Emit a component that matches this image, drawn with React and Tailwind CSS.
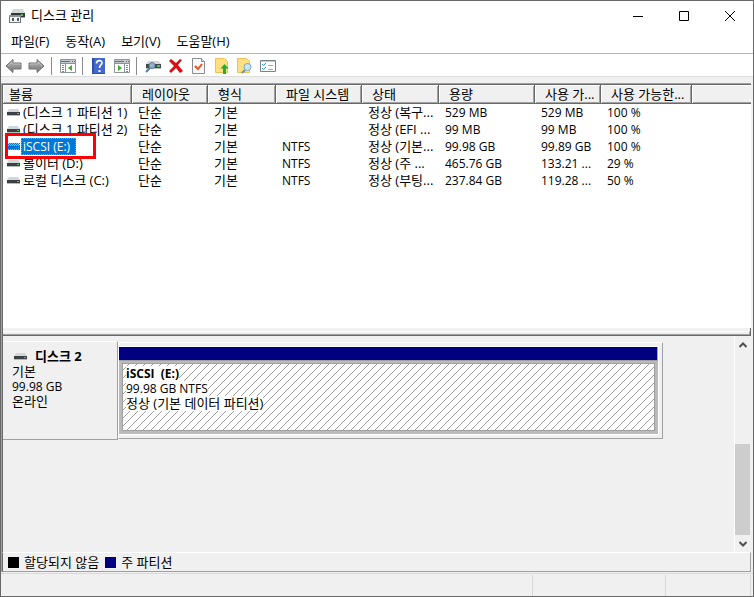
import { useState } from 'react';

const columns = [
  { key: 'volume', label: '볼륨', width: 'w-[129px]' },
  { key: 'layout', label: '레이아웃', width: 'w-[76px]', text: 'text-[13px]' },
  { key: 'type', label: '형식', width: 'w-[68px]', text: 'text-[13px]' },
  { key: 'fs', label: '파일 시스템', width: 'w-[86px]' },
  { key: 'status', label: '상태', width: 'w-[77px]', text: 'text-[13px]' },
  { key: 'capacity', label: '용량', width: 'w-[96px]' },
  { key: 'free', label: '사용 가...', width: 'w-[66px]' },
  { key: 'percent', label: '사용 가능한...', width: 'w-[91px]' },
];

const volumes = [
  { volume: '(디스크 1 파티션 1)', layout: '단순', type: '기본', fs: '', status: '정상 (복구...', capacity: '529 MB', free: '529 MB', percent: '100 %' },
  { volume: '(디스크 1 파티션 2)', layout: '단순', type: '기본', fs: '', status: '정상 (EFI ...', capacity: '99 MB', free: '99 MB', percent: '100 %' },
  { volume: 'iSCSI (E:)', layout: '단순', type: '기본', fs: 'NTFS', status: '정상 (기본...', capacity: '99.98 GB', free: '99.89 GB', percent: '100 %' },
  { volume: '볼이터 (D:)', layout: '단순', type: '기본', fs: 'NTFS', status: '정상 (주 ...', capacity: '465.76 GB', free: '133.21 ...', percent: '29 %' },
  { volume: '로컬 디스크 (C:)', layout: '단순', type: '기본', fs: 'NTFS', status: '정상 (부팅...', capacity: '237.84 GB', free: '119.28 ...', percent: '50 %' },
];

const menus = ['파일(F)', '동작(A)', '보기(V)', '도움말(H)'];

const DriveIcon = ({ selected }) => (
  <svg width="13" height="7" viewBox="0 0 13 7" className="shrink-0" aria-hidden="true">
    <path d="M2 0h9l2 3H0z" fill={selected ? '#8fb8d8' : '#d3d6d8'} />
    <path d="M0 3h13v3H0z" fill={selected ? '#2b5f8c' : '#3c4043'} />
    <path d="M0 6h13v1H0z" fill={selected ? '#7fb2dc' : '#b4b8ba'} />
    <path d="M10 4h2v1h-2z" fill="#2fd64a" />
    {selected && (
      <path d="M0 .5h13M1 1.500h12M0 2.500h13M1 3.500h12M0 4.500h13M1 5.500h12M0 6.500h13" stroke="#0078d7" strokeDasharray="1 1" />
    )}
  </svg>
);

const AppIcon = () => (
  <svg width="16" height="16" viewBox="0 0 16 16" aria-hidden="true">
    <path d="M4 1h10l2 4H2z" fill="#d5d8da" />
    <path d="M2 5h14v4H2z" fill="#34383b" />
    <path d="M2 9h14v1H2z" fill="#a5a8aa" />
    <path d="M12 6h2v2h-2z" fill="#2fd64a" />
    <path d="M0 7h12v8H0z" fill="#74787b" />
    <path d="M1 8h10v6H1z" fill="#f5f5f5" />
    <path d="M0 7h12v2H0z" fill="#8b8f92" />
    <path d="M3 10h2v3H3zM8 10h2v3H8z" fill="#55595c" />
  </svg>
);

const ArrowIcon = ({ flip }) => (
  <svg width="17" height="16" viewBox="0 0 17 16" className={flip ? '-scale-x-100' : ''}>
    <defs>
      <linearGradient id="arrow" x1="0" y1="0" x2="0" y2="1">
        <stop offset="0" stopColor="#b5b5b5" />
        <stop offset="1" stopColor="#777" />
      </linearGradient>
    </defs>
    <path d="M1 8l7-6.500v3.500h8v6H8v3.500z" fill="url(#arrow)" stroke="#707070" strokeLinejoin="round" />
    <path d="M3 8l4-3.700v1.700h8v1" fill="none" stroke="#c8c8c8" strokeWidth=".8" />
  </svg>
);

const PaneIcon = ({ flip }) => (
  <svg width="16" height="14" viewBox="0 0 16 14">
    <path d="M.5.500h15v13H.5z" fill="#fff" stroke="#8b939b" />
    <path d="M1 1h14v3H1z" fill="#c3c9cf" />
    <path d="M1 2.500h9M12 2.500h1M14 2.500h1" stroke="#65717d" />
    <path d="M1 4.500h14" stroke="#8b939b" />
    {flip ? (
      <>
        <path d="M10.500 5v8" stroke="#8b939b" />
        <path d="M12 6.500h2M12 8.500h2M12 10.500h2M12 12.500h2" stroke="#7a8793" />
        <path d="M4 6v6l4-3z" fill="#3fae2a" />
      </>
    ) : (
      <>
        <path d="M5.500 5v8" stroke="#8b939b" />
        <path d="M2 6.500h2M2 8.500h2M2 10.500h2M2 12.500h2" stroke="#7a8793" />
        <path d="M12 6v6L8 9z" fill="#3fae2a" />
      </>
    )}
  </svg>
);

const HelpIcon = () => (
  <svg width="13" height="16" viewBox="0 0 13 16">
    <path d="M0 0h13v16H0z" fill="#2f4fae" />
    <path d="M2 0h11v15H2z" fill="#4469cc" />
    <path d="M4.500 5.500c0-4 6-3.500 5.500-.5-.3 2-2.500 2-2.500 5" fill="none" stroke="#fff" strokeWidth="1.600" />
    <path d="M6.500 12h2v2h-2z" fill="#fff" />
  </svg>
);

const DiskSearchIcon = () => (
  <svg width="16" height="14" viewBox="0 0 16 14">
    <path d="M3 2h11l2 3H1z" fill="#d5d8da" />
    <path d="M1 5h15v4H1z" fill="#44484b" />
    <path d="M1 9h15v1H1z" fill="#b9bdbf" />
    <path d="M12 6h3v2h-3z" fill="#2fd64a" />
    <path d="M5 9l-4 4" stroke="#587b98" strokeWidth="2" />
    <circle cx="7" cy="6.500" r="3" fill="#8fb2cc" stroke="#5d7f9c" />
  </svg>
);

const DeleteIcon = () => (
  <svg width="14" height="14" viewBox="0 0 14 14">
    <path d="M0 2l2-2 5 4 4-4 2 1-4 5 5 6-3 2-4-5-5 5-2-2 5-5z" fill="#d90d16" />
  </svg>
);

const CheckPageIcon = () => (
  <svg width="13" height="16" viewBox="0 0 13 16">
    <path d="M.5.500h9l3 3v12H.5z" fill="#f8f9fa" stroke="#8c8c8c" />
    <path d="M9.500.500v3h3" fill="#ddd" stroke="#8c8c8c" />
    <path d="M3 8l3 3 4-5" fill="none" stroke="#e8521d" strokeWidth="2" />
  </svg>
);

const PageUpIcon = () => (
  <svg width="14" height="16" viewBox="0 0 14 16">
    <path d="M.5.500h9l3 3v11H.5z" fill="#ffdf80" stroke="#e9c35a" />
    <path d="M9.500 6l4 4.500h-2.500V16H8v-5.500H5.500z" fill="#2ea92e" />
  </svg>
);

const PageSearchIcon = () => (
  <svg width="15" height="16" viewBox="0 0 15 16">
    <path d="M.5.500h9l3 3v11H.5z" fill="#ffdf80" stroke="#e9c35a" />
    <path d="M8 12l-3 3" stroke="#6b8fae" strokeWidth="2" />
    <circle cx="10.500" cy="9" r="3.500" fill="#c9e5f5" stroke="#7fa6c5" />
  </svg>
);

const ListIcon = () => (
  <svg width="16" height="12" viewBox="0 0 16 12">
    <path d="M.5.500h15v11H.5z" fill="#fff" stroke="#78828b" />
    <path d="M1 1.500h14" stroke="#c4cbd1" />
    <path d="M2 4l1.500 1.500L6 3M2 8l1.500 1.500L6 7" fill="none" stroke="#3b8ee0" />
    <path d="M8 5.500h5M8 9.500h5" stroke="#a2abb3" />
  </svg>
);

const ToolButton = ({ label, children }) => (
  <button type="button" aria-label={label} className="flex h-[22px] w-[23px] items-center justify-center">
    {children}
  </button>
);

const Divider = () => <span className="ml-[3px] mr-1 h-[18px] w-px bg-[#8d8d8d]" />;

const TitleBar = () => (
  <header className="flex h-[29px] items-center justify-between bg-white pl-2">
    <h1 className="flex items-center gap-1.5 text-[13px]">
      <AppIcon />
      디스크 관리
    </h1>
    <div className="flex">
      <button type="button" aria-label="최소화" className="flex h-7 w-[46px] items-center justify-center">
        <svg width="10" height="10" viewBox="0 0 10 10"><path d="M0 5.500h10" stroke="#000" /></svg>
      </button>
      <button type="button" aria-label="최대화" className="flex h-7 w-[46px] items-center justify-center">
        <svg width="10" height="10" viewBox="0 0 10 10"><path d="M.5.500h9v9h-9z" fill="none" stroke="#000" /></svg>
      </button>
      <button type="button" aria-label="닫기" className="flex h-7 w-[46px] items-center justify-center">
        <svg width="10" height="10" viewBox="0 0 10 10"><path d="M0 0l10 10M10 0L0 10" stroke="#000" /></svg>
      </button>
    </div>
  </header>
);

const Toolbar = () => (
  <div className="flex h-[23px] items-center border-b border-[#dcdcdc] bg-white pl-px pt-px">
    <ToolButton label="뒤로"><ArrowIcon /></ToolButton>
    <ToolButton label="앞으로"><ArrowIcon flip /></ToolButton>
    <Divider />
    <ToolButton label="콘솔 트리 표시"><PaneIcon /></ToolButton>
    <Divider />
    <ToolButton label="도움말"><HelpIcon /></ToolButton>
    <ToolButton label="작업 창 표시"><PaneIcon flip /></ToolButton>
    <Divider />
    <ToolButton label="디스크 다시 검사"><DiskSearchIcon /></ToolButton>
    <ToolButton label="삭제"><DeleteIcon /></ToolButton>
    <ToolButton label="속성"><CheckPageIcon /></ToolButton>
    <ToolButton label="열기"><PageUpIcon /></ToolButton>
    <ToolButton label="탐색"><PageSearchIcon /></ToolButton>
    <ToolButton label="설정"><ListIcon /></ToolButton>
  </div>
);

const VolumeCell = ({ name, selected, onSelect }) => (
  <button type="button" onClick={onSelect} className="relative flex h-[17px] items-center gap-px pl-1">
    <DriveIcon selected={selected} />
    <span
      className={
        selected
          ? 'bg-[#0078d7] pl-0.5 pr-1.5 leading-[17px] text-white outline-1 -outline-offset-1 outline-dotted outline-[#e58a2c]'
          : 'pl-0.5 text-[13px] leading-[17px]'
      }
    >
      {name}
    </span>
    {selected && <span className="absolute -top-[5px] left-0.5 z-10 h-[26px] w-[91px] border-3 border-[#ff0000]" />}
  </button>
);

const VolumeTable = () => {
  const [selected, setSelected] = useState('iSCSI (E:)');

  return (
    <div className="h-[244px] border-l border-t border-[#696969] bg-white">
      <table className="w-full table-fixed border-separate border-spacing-0 text-left">
        <thead>
          <tr className="h-[19px]">
            {columns.map((column, index) => (
              <th
                key={column.key}
                className={`${column.width} ${index ? 'pl-2.5' : 'pl-1.5'} whitespace-nowrap border-b border-r border-[#696969] bg-[#f0f0f0] py-0 pr-0 text-[13px] font-normal leading-[18px] shadow-[inset_1px_1px_0_#fff,inset_-1px_-1px_0_#a0a0a0]`}
              >
                {column.label}
              </th>
            ))}
            <th className="border-b border-[#696969] bg-[#f0f0f0] p-0 shadow-[inset_1px_1px_0_#fff,inset_0_-1px_0_#a0a0a0]" />
          </tr>
        </thead>
        <tbody>
          {volumes.map((row) => (
            <tr key={row.volume} className="h-[17px] whitespace-nowrap">
              <td className="p-0">
                <VolumeCell name={row.volume} selected={selected === row.volume} onSelect={() => setSelected(row.volume)} />
              </td>
              {columns.slice(1).map((column) => (
                <td key={column.key} className={`p-0 pl-1.5 leading-[17px] ${column.text || ''}`}>
                  {row[column.key]}
                </td>
              ))}
              <td className="p-0" />
            </tr>
          ))}
        </tbody>
      </table>
    </div>
  );
};

const Hatch = () => (
  <svg width="100%" height="100%" className="col-start-1 row-start-1" shapeRendering="crispEdges" aria-hidden="true">
    <defs>
      <pattern id="hatch" width="8" height="8" patternUnits="userSpaceOnUse">
        <path
          d="M5 0h1v1h-1zM4 1h1v1h-1zM3 2h1v1h-1zM2 3h1v1h-1zM1 4h1v1h-1zM0 5h1v1h-1zM7 6h1v1h-1zM6 7h1v1h-1z"
          fill="#a0a0a0"
        />
      </pattern>
    </defs>
    <rect width="100%" height="100%" fill="#fff" />
    <rect width="100%" height="100%" fill="url(#hatch)" />
  </svg>
);

const Partition = () => (
  <div className="mt-px h-[97px] w-[545px] border-b border-l border-r border-t border-[#a0a0a0] border-l-white border-t-white pb-[3px] pr-[3px] pt-[3px]">
    <div className="flex h-full flex-col border-b border-r border-t border-white bg-[#bababa]">
      <div className="h-[14px] border-b border-r border-[#a0a0a0] bg-[#000080]" />
      <div className="mx-[3px] mb-[3px] mt-0.5 grid min-h-0 flex-1 border border-[#a0a0a0]">
        <Hatch />
        <div className="z-10 col-start-1 row-start-1 pl-[3px] pt-0.5">
          <p className="w-fit bg-white font-bold leading-[15px]">iSCSI&nbsp; (E:)</p>
          <p className="w-fit bg-white leading-[15px]">99.98 GB NTFS</p>
          <p className="w-fit bg-white text-[13px] leading-[15px]">정상 (기본 데이터 파티션)</p>
        </div>
      </div>
    </div>
  </div>
);

const ScrollBar = () => (
  <div className="flex w-[17px] flex-col border-l border-white pr-px">
    <button type="button" aria-label="위로 스크롤" className="flex h-[17px] items-center justify-center">
      <svg width="8" height="6" viewBox="0 0 8 6"><path d="M.5 5L4 1.500 7.500 5" fill="none" stroke="#505050" strokeWidth="2" /></svg>
    </button>
    <div className="flex-1" />
    <div className="h-[91px] bg-[#cdcdcd]" />
    <button type="button" aria-label="아래로 스크롤" className="flex h-[17px] items-center justify-center">
      <svg width="8" height="6" viewBox="0 0 8 6"><path d="M.5 1L4 4.500 7.500 1" fill="none" stroke="#505050" strokeWidth="2" /></svg>
    </button>
  </div>
);

const DiskPane = () => (
  <section className="flex h-[216px] border-l border-[#696969]">
    <div className="flex flex-1 items-start pt-[5px]">
      <div className="h-[99px] w-[115px] border-b border-r border-t border-[#a0a0a0] border-t-white pl-[9px] pt-1.5 leading-[15px]">
        <h2 className="flex items-center gap-2 pl-0.5 text-[13px] font-bold leading-[16px]">
          <DriveIcon />
          디스크 2
        </h2>
        <p className="text-[13px] leading-[15px]">기본</p>
        <p>99.98 GB</p>
        <p className="text-[13px] leading-[15px]">온라인</p>
      </div>
      <Partition />
    </div>
    <ScrollBar />
  </section>
);

const Legend = () => (
  <div className="flex h-5 items-center gap-1.5 border-b border-l border-r border-t border-[#a0a0a0] border-l-[#696969] border-t-white pl-[5px] text-[13px] leading-[18px]">
    <span className="flex items-center gap-[5px]"><i className="size-[11px] bg-black" />할당되지 않음</span>
    <span className="flex items-center gap-[5px]"><i className="size-[11px] bg-[#000080]" />주 파티션</span>
  </div>
);

export default function App() {
  return (
    <main className="flex min-h-screen flex-col border border-[#696969] bg-[#f0f0f0] font-['Open_Sans','Noto_Sans_CJK_KR',sans-serif] text-[12px] text-black">
      <TitleBar />
      <nav className="flex h-6 items-center gap-4 border-b border-[#b4b4b4] bg-white pl-2.5 text-[13px]">
        {menus.map((menu) => (
          <button key={menu} type="button">{menu}</button>
        ))}
      </nav>
      <Toolbar />
      <div className="mr-0.5 mt-1.5 border-l border-t border-[#a0a0a0]">
        <VolumeTable />
        <div className="h-2 border-b border-l border-r border-[#696969] pt-[3px]">
          <div className="h-1 border-b border-r border-t border-[#a0a0a0] border-t-white" />
        </div>
        <DiskPane />
        <Legend />
      </div>
      <footer className="mt-px flex flex-1 border-t border-[#dadada] pt-px">
        <div className="flex-1 border-r border-[#d7d7d7]" />
        <div className="w-[133px] border-r border-[#d7d7d7]" />
        <div className="mr-0.5 w-[85px] border-r border-[#d7d7d7]" />
      </footer>
    </main>
  );
}
